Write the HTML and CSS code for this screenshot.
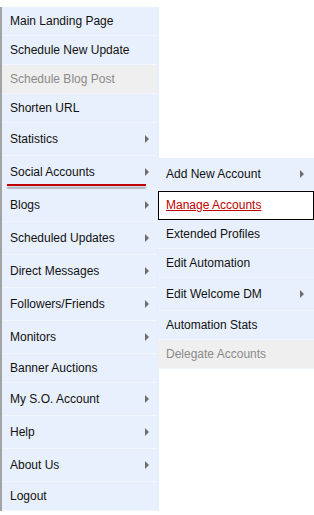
FILE: index.html
```html
<!DOCTYPE html>
<html lang="en">
<head>
    <meta charset="UTF-8">
    <meta name="viewport" content="width=device-width, initial-scale=1.0">
    <title>Menu</title>
    <link rel="stylesheet" href="styles.css">
</head>
<body>
    <ul class="menu">
        <li class="item">Main Landing Page</li>
        <li class="item">Schedule New Update</li>
        <li class="item disabled">Schedule Blog Post</li>
        <li class="item">Shorten URL</li>
        <li class="item sub">Statistics</li>
        <li class="item sub marked">Social Accounts
            <ul class="menu submenu">
                <li class="item sub">Add New Account</li>
                <li class="item current"><a href="#">Manage Accounts</a></li>
                <li class="item">Extended Profiles</li>
                <li class="item">Edit Automation</li>
                <li class="item sub">Edit Welcome DM</li>
                <li class="item">Automation Stats</li>
                <li class="item disabled">Delegate Accounts</li>
            </ul>
        </li>
        <li class="item sub">Blogs</li>
        <li class="item sub">Scheduled Updates</li>
        <li class="item sub">Direct Messages</li>
        <li class="item sub">Followers/Friends</li>
        <li class="item sub">Monitors</li>
        <li class="item">Banner Auctions</li>
        <li class="item sub">My S.O. Account</li>
        <li class="item sub">Help</li>
        <li class="item sub">About Us</li>
        <li class="item">Logout</li>
    </ul>
</body>
</html>
```

FILE: styles.css
```css
body { margin: 0; background: #fff; font-family: "Liberation Sans", Arial, sans-serif; font-size: 12px; color: #111; }
.menu { list-style: none; margin: 7px 0 0; padding: 0 2px 0 0; width: 155px; border-left: 2px solid #a3a3a3; background: #e6eefb; }
.item { position: relative; height: 29px; line-height: 28px; padding-left: 8px; background: #e8f0fd; border-bottom: 1px solid #f1f5fd; box-sizing: border-box; }
.item.sub { height: 33px; line-height: 32px; }
.item.sub::after { content: ""; position: absolute; right: 8px; top: 12px; border-left: 4px solid #6e6e6e; border-top: 4px solid transparent; border-bottom: 4px solid transparent; }
.item.disabled { background: #efefef; color: #8a8a8a; }
.marked::before { content: ""; position: absolute; left: 5px; top: 28px; width: 139px; height: 2px; background: #c00000; box-shadow: 0 3px 2px #9aa0aa; }
.submenu { position: absolute; left: 156px; top: 2px; margin: 0; width: 156px; border-left: none; padding: 0; background: #e8f0fd; color: #111; }
.submenu .item.sub::after { right: 10px; }
.submenu .item.current { border: 1px solid #000; background: #fff; height: 29px; line-height: 26px; padding-left: 7px; }
.submenu .item.current::before { content: ""; position: absolute; left: 3px; right: -4px; top: 30px; height: 2px; background: #c00000; box-shadow: 0 3px 2px #9aa0aa; }
.current a { color: #c00000; text-decoration: underline; }
```
